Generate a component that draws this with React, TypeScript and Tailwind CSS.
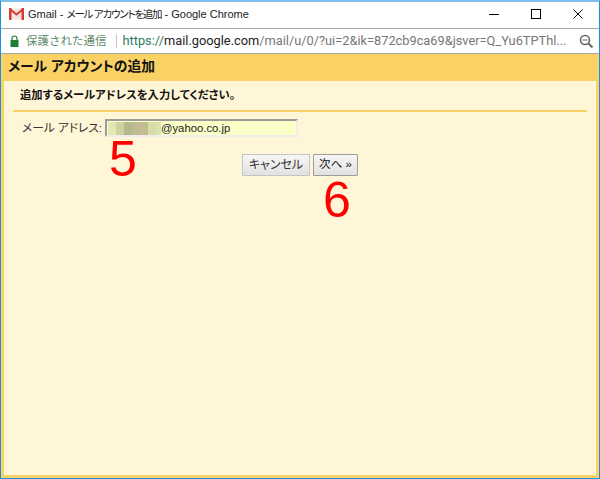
const cjk = "font-['Liberation_Sans','Noto_Sans_CJK_JP',sans-serif] [font-feature-settings:'palt']"

const mosaic = [
  { w: 'w-[8px]', color: 'bg-[#e4e8b4]' },
  { w: 'w-[8px]', color: 'bg-[#cdd2a0]' },
  { w: 'w-[8px]', color: 'bg-[#b3b98c]' },
  { w: 'w-[8px]', color: 'bg-[#c0bc92]' },
  { w: 'w-[8px]', color: 'bg-[#c4bd94]' },
  { w: 'w-[8px]', color: 'bg-[#d8dda6]' },
  { w: 'w-[5px]', color: 'bg-[#dfe2ae]' },
]

export default function App() {
  return (
    <div className="relative w-[600px] h-[479px] overflow-hidden flex flex-col border-x border-b border-t-2 border-x-[#1b8fe3] border-b-[#1b8fe3] border-t-[#7fbdea] bg-white">
      {/* Title bar */}
      <div className="h-[26px] shrink-0 flex items-center bg-white pb-[2px]">
        <svg width="15" height="12" viewBox="0 0 15 12" className="ml-[8px] mr-[4px] shrink-0">
          <rect x="0.5" y="0.5" width="14" height="11" fill="#f4e4e2" />
          <path d="M0 0.5 L7.5 6.5 L15 0.5" fill="none" stroke="#d93a32" strokeWidth="2" />
          <rect x="0" y="0" width="2.5" height="12" fill="#d93a32" />
          <rect x="12.5" y="0" width="2.5" height="12" fill="#d93a32" />
        </svg>
        <span className={`${cjk} text-[11px] text-[#222] whitespace-nowrap`}>
          Gmail - <span className="text-[10.5px] tracking-[-1.2px]">メール アカウントを追加</span> - Google Chrome
        </span>
        <div className="ml-auto flex items-center">
          <div className="w-[42px] flex justify-center"><div className="w-[10px] h-px bg-black" /></div>
          <div className="w-[42px] flex justify-center"><div className="w-[10px] h-[10px] border border-black" /></div>
          <div className="w-[42px] flex justify-center">
            <svg width="10" height="10" viewBox="0 0 10 10"><path d="M0.5 0.5 L9.5 9.5 M9.5 0.5 L0.5 9.5" stroke="#111" strokeWidth="1" /></svg>
          </div>
        </div>
      </div>

      {/* Address bar */}
      <div className="h-[26px] shrink-0 flex items-center border-y border-[#a8a8a8] bg-white">
        <svg width="9" height="12" viewBox="0 0 9 12" className="ml-[9px] shrink-0">
          <path d="M2 5 V3.5 a2.5 2.5 0 0 1 5 0 V5" fill="none" stroke="#1e7e34" strokeWidth="1.2" />
          <rect x="0.5" y="5" width="8" height="7" fill="#1e7e34" />
        </svg>
        <span className="ml-[7px] font-['Noto_Sans_CJK_JP',sans-serif] text-[11.5px] text-[#5f8a6a] whitespace-nowrap">保護された通信</span>
        <div className="ml-[9px] w-px h-[14px] bg-[#c4c4c4] shrink-0" />
        <span className="ml-[6px] font-['Roboto',sans-serif] text-[12.8px] whitespace-nowrap text-[#777]">
          <span className="text-[#2e7d5a]">https://</span>
          <span className="text-[#222]">mail.google.com</span>
          /mail/u/0/?ui=2&amp;ik=872cb9ca69&amp;jsver=Q_Yu6TPThl...
        </span>
        <svg width="15" height="15" viewBox="0 0 15 15" className="ml-auto mr-[5px] shrink-0">
          <circle cx="6" cy="6" r="4.5" fill="none" stroke="#666" strokeWidth="1.6" />
          <path d="M9.5 9.5 L13.5 13.5" stroke="#666" strokeWidth="2" />
          <path d="M3.5 6 H8.5" stroke="#666" strokeWidth="1" />
        </svg>
      </div>

      {/* Dialog */}
      <div className="flex-1 flex flex-col bg-[#fad165]">
        <div className={`${cjk} h-[27px] shrink-0 flex items-center pl-[7px] text-[13.8px] font-bold text-[#111]`}>メール アカウントの追加</div>
        <div className="flex-1 mx-[3px] mb-[3px] bg-[#fff6d8] px-[9px] flex flex-col">
          <div className={`${cjk} h-[31px] shrink-0 flex items-center pl-[7px] text-[11.3px] font-bold text-[#111] border-b-2 border-[#fad165]`}>
            追加するメールアドレスを入力してください。
          </div>
          <div className="flex items-center mt-[7px] pl-[9px]">
            <span className={`${cjk} text-[11.7px] text-[#333] w-[83px] whitespace-nowrap`}>メール アドレス:</span>
            <div className="w-[193px] h-[18px] flex items-center border-2 border-t-[#9b9b9b] border-l-[#9b9b9b] border-r-[#eeeeee] border-b-[#eeeeee] bg-[#fbffc8]">
              <div className="flex h-[13px] ml-px">
                {mosaic.map((m, i) => (
                  <div key={i} className={`${m.w} ${m.color}`} />
                ))}
              </div>
              <span className="font-['Liberation_Sans',sans-serif] text-[11.3px] text-[#222]">@yahoo.co.jp</span>
            </div>
          </div>
          <div className="flex justify-end gap-[3px] mt-[17px] mr-[229px]">
            <button className={`${cjk} w-[68px] h-[22px] text-[12px] text-[#333] bg-gradient-to-b from-[#f6f6f6] to-[#e2e2e2] border border-[#c4c4c4] rounded-[1px]`}>キャンセル</button>
            <button className={`${cjk} w-[45px] h-[22px] text-[11.5px] text-[#111] bg-gradient-to-b from-[#f6f6f6] to-[#e2e2e2] border border-[#9c9c9c] rounded-[1px]`}>次へ »</button>
          </div>
        </div>
      </div>

      {/* Step annotations */}
      <span className="absolute left-[108px] top-[132px] font-['Liberation_Sans',sans-serif] text-[50px] leading-none text-[#ff0000]">5</span>
      <span className="absolute left-[322px] top-[173px] font-['Liberation_Sans',sans-serif] text-[50px] leading-none text-[#ff0000]">6</span>
    </div>
  )
}
